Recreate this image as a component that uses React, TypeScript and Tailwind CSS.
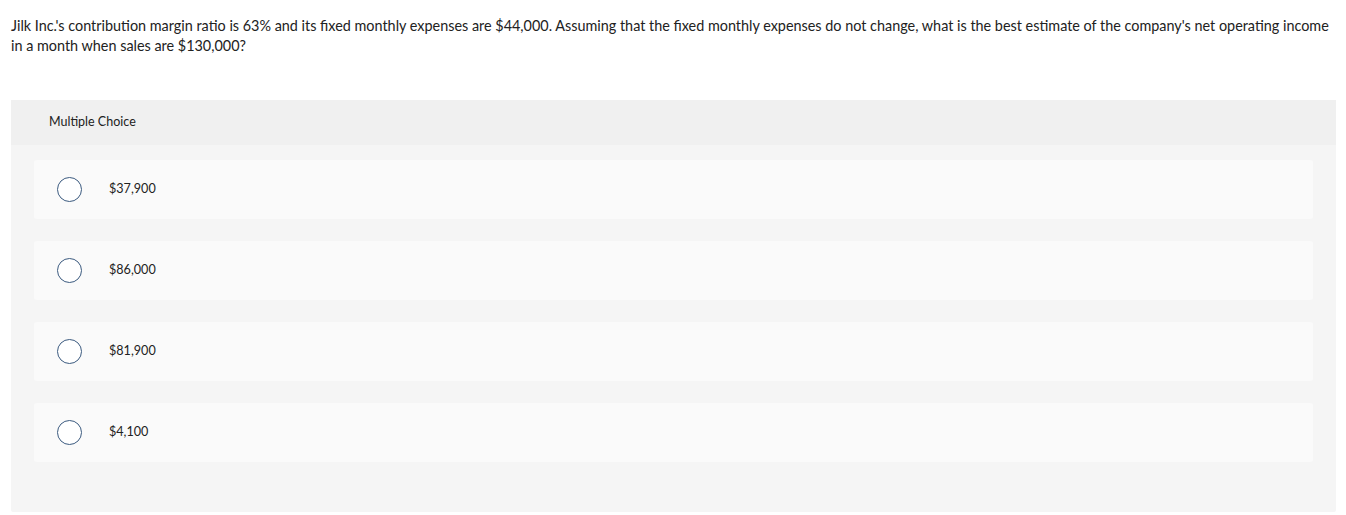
const choices = ["$37,900", "$86,000", "$81,900", "$4,100"];

function Radio() {
  return (
    <span className="block w-[25px] h-[25px] rounded-full border border-[#3b5a7f] bg-white shrink-0" />
  );
}

export default function App() {
  return (
    <div className="bg-white min-h-[515px] text-[#222] font-['Lato','Open_Sans',sans-serif]">
      <p className="px-[11px] pt-[16px] text-[14.4px] leading-[20px] whitespace-nowrap">
        Jilk Inc.'s contribution margin ratio is 63% and its fixed monthly expenses are $44,000. Assuming that the fixed
        monthly expenses do not change, what is the best estimate of the company's net operating income
        <br />
        in a month when sales are $130,000?
      </p>

      <div className="mt-[44px] ml-[11px] mr-[10px] rounded-[2px] bg-[#f5f5f5] h-[412px]">
        <div className="h-[45px] bg-[#f0f0f0] flex items-center pl-[38px] text-[12.5px]">Multiple Choice</div>
        <ul className="px-[23px] pt-[15px] flex flex-col gap-[22px]">
          {choices.map((c) => (
            <li key={c} className="h-[59px] bg-[#fafafa] rounded-[3px] flex items-center pl-[23px] gap-[27px]">
              <Radio />
              <span className="text-[12.6px]">{c}</span>
            </li>
          ))}
        </ul>
      </div>
    </div>
  );
}
